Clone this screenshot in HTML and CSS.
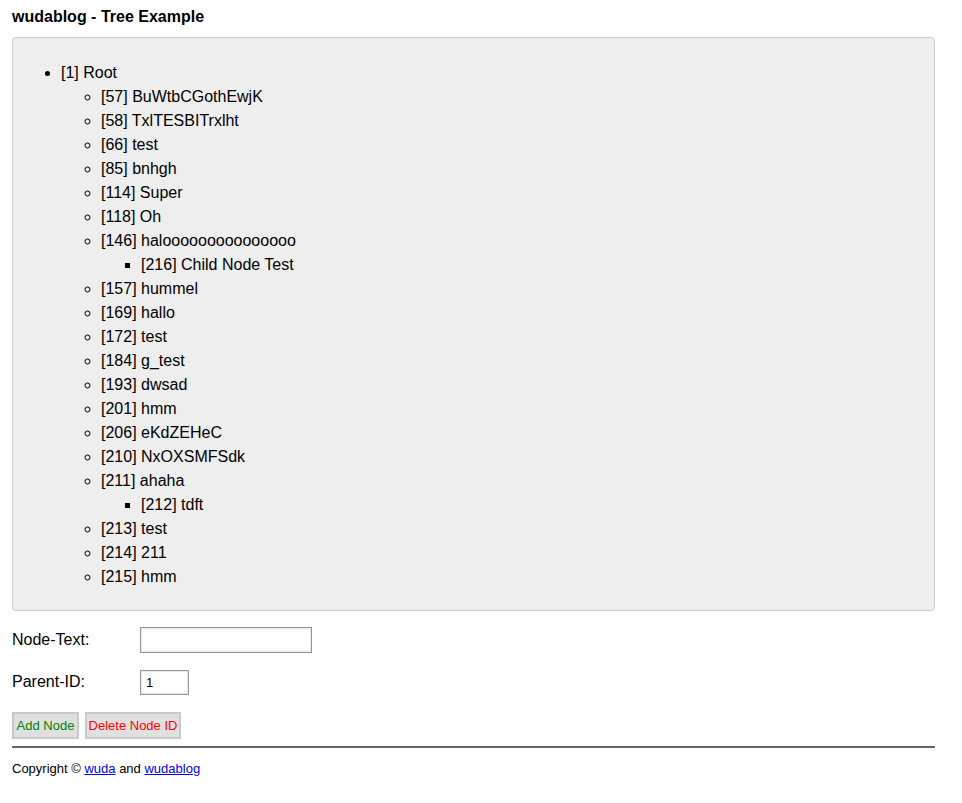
FILE: index.html
```html
<!DOCTYPE html>
<html>
<head>
<meta charset="utf-8">
<title>wudablog - Tree Example</title>
<link rel="stylesheet" href="styles.css">
</head>
<body>
<div class="page">
  <h1 class="title">wudablog - Tree Example</h1>
  <div class="tree-box">
    <ul class="tree">
      <li>[1] Root
        <ul>
          <li>[57] BuWtbCGothEwjK</li>
          <li>[58] TxlTESBITrxlht</li>
          <li>[66] test</li>
          <li>[85] bnhgh</li>
          <li>[114] Super</li>
          <li>[118] Oh</li>
          <li>[146] halooooooooooooooo
            <ul><li>[216] Child Node Test</li></ul>
          </li>
          <li>[157] hummel</li>
          <li>[169] hallo</li>
          <li>[172] test</li>
          <li>[184] g_test</li>
          <li>[193] dwsad</li>
          <li>[201] hmm</li>
          <li>[206] eKdZEHeC</li>
          <li>[210] NxOXSMFSdk</li>
          <li>[211] ahaha
            <ul><li>[212] tdft</li></ul>
          </li>
          <li>[213] test</li>
          <li>[214] 211</li>
          <li>[215] hmm</li>
        </ul>
      </li>
    </ul>
  </div>
  <form class="form">
    <div class="row">
      <label class="label">Node-Text:</label>
      <input class="input input-text" type="text">
    </div>
    <div class="row">
      <label class="label">Parent-ID:</label>
      <input class="input input-id" type="text" value="1">
    </div>
    <div class="buttons">
      <button type="button" class="btn btn-add">Add Node</button>
      <button type="button" class="btn btn-del">Delete Node ID</button>
    </div>
  </form>
  <hr class="rule">
  <p class="footer">Copyright © <a href="#">wuda</a> and <a href="#">wudablog</a></p>
</div>
</body>
</html>
```

FILE: styles.css
```css
html, body {
  margin: 0;
  padding: 0;
  background: #fff;
}
body {
  font-family: "Liberation Sans", Arial, sans-serif;
  color: #000;
}
.page {
  width: 923px;
  padding: 0 12px;
}
.title {
  font-size: 16px;
  font-weight: bold;
  margin: 0;
  padding-top: 7px;
  line-height: 19px;
  height: 30px;
}
.tree-box {
  background: #eee;
  border: 1px solid #ccc;
  border-radius: 4px;
  padding: 23px 8px 21px 8px;
}
.tree {
  margin: 0;
  padding-left: 40px;
  font-size: 16px;
  line-height: 24px;
  list-style: disc;
}
.tree ul {
  margin: 0;
  padding-left: 40px;
  list-style: circle;
}
.tree ul ul {
  list-style: square;
}
.form {
  margin: 0;
  padding-top: 16px;
}
.row {
  display: flex;
  align-items: center;
  height: 26px;
  margin-bottom: 16px;
}
.label {
  width: 128px;
  font-size: 16px;
}
.input {
  box-sizing: border-box;
  height: 26px;
  border: 1px solid #999;
  box-shadow: inset 0 0 0 1px #e8e8e8;
  font-family: "Liberation Sans", Arial, sans-serif;
  font-size: 13px;
  padding: 2px 5px;
  margin: 0;
  background: #fff;
}
.input-text { width: 172px; }
.input-id { width: 49px; height: 25px; }
.buttons {
  display: flex;
  gap: 6px;
  padding-top: 1px;
}
.btn {
  box-sizing: border-box;
  height: 27px;
  border: 2px solid #c9c9c9;
  background: #e0e0e0;
  font-family: "Liberation Sans", Arial, sans-serif;
  font-size: 13px;
  padding: 0;
  margin: 0;
  border-radius: 0;
  white-space: nowrap;
  text-align: center;
}
.btn-add { color: #008000; width: 67px; }
.btn-del { color: #ff0000; width: 96px; }
.rule {
  margin: 7px 0 0 0;
  border: 0;
  border-top: 2px solid #666;
  height: 0;
}
.footer {
  margin: 0;
  padding-top: 13px;
  font-size: 13px;
  line-height: 16px;
}
.footer a { color: #0000ee; }
```
